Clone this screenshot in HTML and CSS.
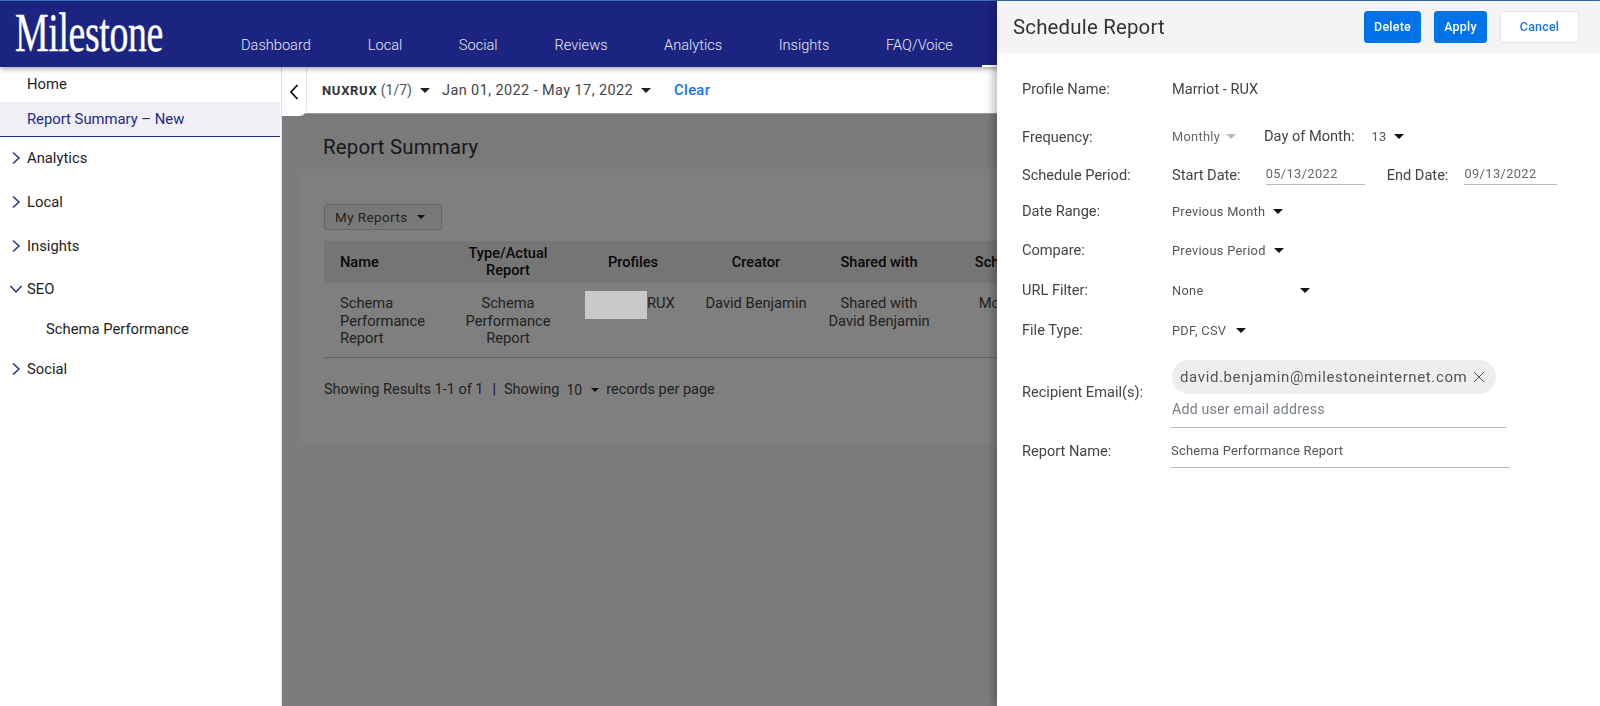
FILE: index.html
```html
<!DOCTYPE html>
<html lang="en">
<head>
<meta charset="utf-8">
<title>Schedule Report</title>
<link rel="stylesheet" href="styles.css">
</head>
<body>
<header class="topbar">
  <div class="logo"><span class="logo-text">Milestone</span></div>
  <nav class="topnav">
    <a class="nav-dashboard">Dashboard</a>
    <a class="nav-local">Local</a>
    <a class="nav-social">Social</a>
    <a class="nav-reviews">Reviews</a>
    <a class="nav-analytics">Analytics</a>
    <a class="nav-insights">Insights</a>
    <a class="nav-faq">FAQ/Voice</a>
  </nav>
  <span class="active-mark"></span>
</header>
<div class="shell">
  <aside class="sidebar">
    <div class="side-link side-home">Home</div>
    <div class="side-link side-current">Report Summary – New</div>
    <div class="side-item side-analytics"><svg class="chev" viewBox="0 0 10 14"><path d="M2 1.5 8 7l-6 5.5"/></svg>Analytics</div>
    <div class="side-item"><svg class="chev" viewBox="0 0 10 14"><path d="M2 1.5 8 7l-6 5.5"/></svg>Local</div>
    <div class="side-item side-insights"><svg class="chev" viewBox="0 0 10 14"><path d="M2 1.5 8 7l-6 5.5"/></svg>Insights</div>
    <div class="side-item side-seo"><svg class="chev-down" viewBox="0 0 14 10"><path d="M1.5 2 7 8l5.500-6"/></svg>SEO</div>
    <div class="side-sub">Schema Performance</div>
    <div class="side-item side-social"><svg class="chev" viewBox="0 0 10 14"><path d="M2 1.5 8 7l-6 5.5"/></svg>Social</div>
  </aside>
  <main class="main">
    <div class="filterbar">
      <button class="collapse"><svg viewBox="0 0 12 18"><path d="M9.500 2 3 9l6.500 7"/></svg></button>
      <span class="filter-profile"><b>NUXRUX</b> (1/7)</span><i class="caret filter-caret"></i>
      <span class="filter-date">Jan 01, 2022 - May 17, 2022</span><i class="caret filter-caret"></i>
      <a class="clear">Clear</a>
    </div>
    <div class="content">
      <section class="card">
        <h1 class="card-title">Report Summary</h1>
        <div class="card-body">
          <button class="myreports">My Reports<i class="caret small-caret"></i></button>
          <table class="reports">
            <colgroup><col class="c1"><col class="c2"><col class="c3"><col class="c4"><col class="c5"><col class="c6"></colgroup>
            <thead>
              <tr><th class="left">Name</th><th>Type/Actual Report</th><th>Profiles</th><th>Creator</th><th>Shared with</th><th>Schedule</th></tr>
            </thead>
            <tbody>
              <tr>
                <td class="left">Schema Performance Report</td>
                <td>Schema Performance Report</td>
                <td><span class="profile"><span class="redact"></span>RUX</span></td>
                <td class="nowrap">David Benjamin</td>
                <td class="shared">Shared with David Benjamin</td>
                <td>Monthly</td>
              </tr>
            </tbody>
          </table>
          <div class="pager">
            <span>Showing Results 1-1 of 1</span><span class="sep">|</span><span>Showing</span><span class="per">10</span><i class="caret small-caret"></i><span class="rec">records per page</span>
          </div>
        </div>
      </section>
      <div class="scrim"></div>
    </div>
  </main>
</div>
<aside class="drawer">
  <div class="drawer-head">
    <h2 class="drawer-title">Schedule Report</h2>
    <div class="drawer-actions">
      <button class="btn btn-primary btn-delete">Delete</button>
      <button class="btn btn-primary btn-apply">Apply</button>
      <button class="btn btn-plain">Cancel</button>
    </div>
  </div>
  <div class="form">
    <div class="row row-profile"><label>Profile Name:</label><span class="val val-big">Marriot - RUX</span></div>
    <div class="row row-freq"><label>Frequency:</label><span class="val val-muted">Monthly</span><i class="caret caret-muted"></i><span class="inline-label dom">Day of Month:</span><span class="val dom-val">13</span><i class="caret caret-black"></i></div>
    <div class="row row-period"><label>Schedule Period:</label><span class="inline-label">Start Date:</span><span class="date date-start">05/13/2022</span><span class="inline-label end-label">End Date:</span><span class="date date-end">09/13/2022</span></div>
    <div class="row row-range"><label>Date Range:</label><span class="val">Previous Month</span><i class="caret caret-black"></i></div>
    <div class="row"><label>Compare:</label><span class="val">Previous Period</span><i class="caret caret-black"></i></div>
    <div class="row"><label>URL Filter:</label><span class="val val-url">None</span><i class="caret caret-black"></i></div>
    <div class="row"><label>File Type:</label><span class="val">PDF, CSV</span><i class="caret caret-black caret-file"></i></div>
    <div class="row row-email"><label>Recipient Email(s):</label>
      <div class="emailbox">
        <span class="chip">david.benjamin@milestoneinternet.com<svg class="chip-x" viewBox="0 0 12 12"><path d="M1 1l10 10M11 1 1 11"/></svg></span>
        <span class="placeholder">Add user email address</span>
      </div>
    </div>
    <div class="row row-name"><label>Report Name:</label><span class="name-input">Schema Performance Report</span></div>
  </div>
</aside>
</body>
</html>
```
FILE: styles.css
```css
* { box-sizing: border-box; }
html, body { height: 100%; }
body {
  margin: 0;
  height: 706px;
  overflow: hidden;
  font-family: Roboto, "Liberation Sans", sans-serif;
  color: #222;
  background: #fff;
  display: flex;
  flex-direction: column;
}
button { font-family: inherit; }

/* top bar */
.topbar {
  height: 67px;
  flex: none;
  background: #1b2480;
  border-top: 1px solid #3b70b3;
  display: flex;
  position: relative;
  z-index: 3;
  box-shadow: 0 2px 5px rgba(0,0,0,.35);
}
.logo { width: 241px; flex: none; padding: 2px 0 0 15px; }
.logo-text {
  display: inline-block;
  font-family: "Liberation Serif", serif;
  font-size: 54px;
  line-height: 60px;
  color: #fff;
  transform: scaleX(.7);
  transform-origin: left center;
  letter-spacing: -.5px;
  -webkit-text-stroke: .4px #fff;
}
.topnav { display: flex; padding-top: 34px; font-size: 14.6px; font-weight: 300; color: #e8e8f4; line-height: 20px; }
.nav-local { margin-left: 57px; }
.nav-social { margin-left: 56.500px; }
.nav-reviews { margin-left: 57px; }
.nav-analytics { margin-left: 56.500px; }
.nav-insights { margin-left: 56.500px; }
.nav-faq { margin-left: 56.500px; }
.active-mark { position: absolute; left: 982px; bottom: 0; width: 15px; height: 2px; background: #fff; }

/* shell */
.shell { flex: 1; display: flex; min-height: 0; }
.sidebar { width: 281px; flex: none; background: #fff; font-size: 14.8px; color: #1d1d1d; }
.side-link { padding-left: 27px; }
.side-home { height: 35px; line-height: 35px; }
.side-current {
  height: 35px;
  line-height: 35px;
  color: #232a86;
  background: #f0eff5;
  border-bottom: 1px solid #232a86;
  margin-right: 1px;
}
.side-item { display: flex; align-items: center; height: 44px; padding-left: 11px; }
.side-analytics { height: 42px; margin-bottom: 1px; }
.side-insights { height: 43px; }
.side-seo { height: 44px; }
.side-sub { padding-left: 46px; height: 37px; line-height: 36px; }
.side-social { height: 42px; }
.chev { width: 10px; height: 14px; margin-right: 6px; fill: none; stroke: #232a86; stroke-width: 1.400; }
.chev-down { width: 14px; height: 10px; margin: 0 4px 0 -2px; fill: none; stroke: #232a86; stroke-width: 1.400; }

/* main */
.main { flex: 1; display: flex; flex-direction: column; min-width: 0; background: #f8f8f8; border-left: 1px solid #ddd; }
.filterbar {
  height: 47px;
  flex: none;
  background: #fff;
  display: flex;
  align-items: center;
  font-size: 14.5px;
  color: #444;
  border-bottom: 1px solid #999;
}
.collapse {
  width: 25px;
  height: 49px;
  align-self: flex-start;
  flex: none;
  padding: 0;
  border: 0;
  background: #fff;
  border-bottom-right-radius: 8px;
  position: relative;
  z-index: 2;
  display: flex;
  align-items: center;
  justify-content: center;
  margin-right: 15px;
  border-right: 1px solid #e4e4e4;
}
.collapse svg { width: 12px; height: 18px; fill: none; stroke: #111; stroke-width: 1.800; }
.filter-profile { font-size: 14px; color: #555; }
.filter-profile b { font-size: 13px; color: #333; letter-spacing: .7px; }
.caret { display: inline-block; width: 0; height: 0; border-left: 5px solid transparent; border-right: 5px solid transparent; border-top: 5px solid #222; flex: none; }
.filter-caret { margin: 0 12px 0 8px; }
.filter-date { letter-spacing: .4px; }
.clear { color: #1a73e8; font-weight: 500; margin-left: 11px; font-size: 14.8px; letter-spacing: .3px; }

.content { flex: 1; position: relative; padding-left: 20px; }
.card {
  background: #fff;
  width: 1000px;
  height: 332px;
  border-radius: 3px;
}
.card-title {
  margin: 0;
  height: 55px;
  background: #f4f4f4;
  padding-left: 21px;
  font-size: 20.4px;
  font-weight: 400;
  line-height: 66px;
  color: #333;
  letter-spacing: .2px;
}
.card-body { padding: 35px 0 0 22px; }
.myreports {
  display: flex;
  align-items: center;
  width: 118px;
  height: 26px;
  padding: 0 0 0 10px;
  font-size: 13.500px;
  color: #444;
  background: #f1f1f1;
  border: 1px solid #ccc;
  border-radius: 3px;
  letter-spacing: .4px;
}
.small-caret { margin-left: 9px; border-width: 4px 4px 0 4px; border-style: solid; border-color: #222 transparent transparent; }
.reports { margin-top: 11px; width: 742px; table-layout: fixed; border-collapse: collapse; font-size: 14.7px; line-height: 17.500px; }
.c1 { width: 124px; } .c2 { width: 120px; } .c3 { width: 130px; } .c4 { width: 116px; } .c5 { width: 130px; } .c6 { width: 122px; }
.reports th { height: 42px; padding: 0 10px; background: #eaeaea; font-weight: 500; color: #111; text-align: center; line-height: 17px; font-size: 14.6px; }
.reports td { height: 74px; padding: 12px 16px 9px; vertical-align: top; text-align: center; color: #444; border-bottom: 1px solid #ccc; }
.reports th.left, .reports td.left { text-align: left; padding-left: 16px; }
.reports td.nowrap { white-space: nowrap; padding: 12px 0 9px; }
.reports td.shared { padding: 12px 8px 9px; }
.reports td:nth-child(3) { padding: 8px 0 0 17px; text-align: left; }
.profile { display: flex; align-items: flex-start; line-height: 25px; }
.redact { width: 62px; height: 28px; background: #c9c9c9; position: relative; z-index: 2; flex: none; }
.pager { display: flex; align-items: center; margin-top: 22px; font-size: 14.5px; color: #444; height: 20px; }
.sep { margin: 0 8px 0 9px; color: #222; }
.per { margin-left: 7px; font-size: 14px; }
.rec { margin-left: 7px; }
.scrim { position: absolute; inset: 0; background: rgba(0,0,0,.5); z-index: 1; }

/* drawer */
.drawer {
  position: fixed;
  top: 1px;
  right: 0;
  bottom: 0;
  width: 603px;
  background: #fff;
  z-index: 5;
  box-shadow: -4px 0 8px rgba(0,0,0,.25);
  color: #444;
  font-size: 14px;
}
.drawer-head { height: 52px; background: #f4f4f4; display: flex; align-items: center; justify-content: space-between; padding: 0 21px 1px 16px; }
.drawer-title { margin: 0; font-size: 20.4px; font-weight: 400; color: #333; letter-spacing: .2px; }
.drawer-actions { display: flex; gap: 13px; }
.btn { height: 32px; border-radius: 3px; font-size: 12.500px; font-weight: 500; padding: 0; letter-spacing: .2px; }
.btn-primary { background: #0073ea; color: #fff; border: 1px solid #0073ea; }
.btn-delete { width: 57px; }
.btn-apply { width: 53px; }
.btn-plain { width: 79px; background: #fff; color: #1a73e8; border: 1px solid #e6e6e6; }
.form { padding: 16px 0 0 25px; }
.row { display: flex; align-items: center; height: 40px; }
.row label { width: 150px; flex: none; font-size: 14.600px; color: #444; }
.row-freq { margin-top: 7px; }
.row-freq label { padding-top: 2px; }
.row-period { height: 38px; }
.row-range { height: 34px; margin-bottom: 2px; }
.val { font-size: 12.800px; color: #555; letter-spacing: .3px; }
.val-big { font-size: 14.600px; color: #444; letter-spacing: 0; }
.val-muted { color: #666; }
.caret-black { border-width: 5px 5px 0; border-style: solid; border-color: #111 transparent transparent; margin-left: 8px; }
.caret-muted { border-width: 5px 5px 0; border-style: solid; border-color: #bbb transparent transparent; margin-left: 6px; }
.inline-label { font-size: 14.600px; color: #444; }
.dom { margin-left: 28px; }
.dom-val { margin-left: 17px; }
.date { width: 99px; height: 20px; border-bottom: 1px solid #bbb; font-size: 12.800px; color: #666; letter-spacing: .4px; padding-top: 1px; }
.date-start { margin-left: 25px; }
.date-end { width: 93px; margin-left: 16px; }
.end-label { margin-left: 22px; }
.val-url { width: 120px; }
.caret-file { margin-left: 10px; }
.row-email { height: 82px; align-items: flex-start; }
.row-email label { margin-top: 33px; }
.emailbox { width: 335px; height: 68px; margin-top: 10px; margin-left: -1px; padding-left: 1px; border-bottom: 1px solid #bbb; }
.chip { display: inline-flex; align-items: center; height: 34px; padding: 0 7px 0 8px; background: #eee; border-radius: 17px; font-size: 15px; letter-spacing: .62px; color: #555; width: 324px; white-space: nowrap; }
.chip-x { width: 12px; height: 12px; margin-left: 6px; flex: none; fill: none; stroke: #555; stroke-width: 1; }
.placeholder { display: block; margin-top: 7px; font-size: 14.200px; color: #777f88; letter-spacing: .2px; }
.row-name { height: 36px; align-items: flex-start; }
.row-name label { margin-top: 10px; }
.name-input { width: 339px; height: 36px; margin-left: -1px; padding-top: 11px; border-bottom: 1px solid #bbb; font-size: 13px; color: #555; letter-spacing: .2px; }
```
